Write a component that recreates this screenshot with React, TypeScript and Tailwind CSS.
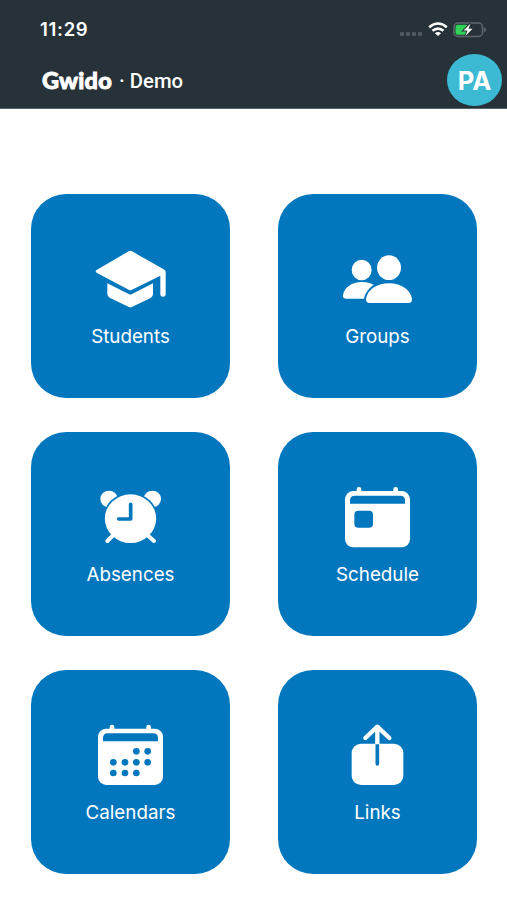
import type { ReactNode } from 'react'

function Icon({ viewBox, children }: { viewBox: string; children: ReactNode }) {
  return (
    <svg width={80} height={70} viewBox={viewBox} fill="white" aria-hidden="true">
      {children}
    </svg>
  )
}

function GraduationIcon() {
  return (
    <Icon viewBox="33 27 240 210">
      <path d="M146 46q5-3 10 0l95 54q6 4 6 8v66q0 8-8 8t-8-8v-55l-85 42q-5 3-10 0l-95-50q-8-5 0-10z" />
      <path d="M82 142l64 32q5 3 10 0l63-32v32q0 8-7 12l-55 26q-6 3-12 0l-56-27q-7-4-7-11z" />
    </Icon>
  )
}

function PeopleIcon() {
  return (
    <Icon viewBox="33 27 240 210">
      <ellipse cx="104" cy="102" rx="30" ry="31" />
      <ellipse cx="186" cy="95" rx="36" ry="37" />
      <path d="M104 138c15 0 28 4 36 8-16 11-26 26-29 42H57c-7 0-10-4-9-10 3-24 28-40 56-40z" />
      <path d="M186 142c39 0 66 22 69 47 1 7-3 12-10 12H128c-8 0-12-5-11-12 4-26 30-47 69-47z" />
    </Icon>
  )
}

function AlarmIcon() {
  return (
    <Icon viewBox="33 22 240 210">
      <ellipse cx="87" cy="70" rx="26" ry="25" />
      <ellipse cx="217" cy="70" rx="26" ry="25" />
      <ellipse cx="151.5" cy="129" rx="82" ry="78" fill="#0277bd" />
      <path d="M100 178L82 196M202 178l20 18" fill="none" stroke="white" strokeWidth="12" strokeLinecap="round" />
      <ellipse cx="151.5" cy="129" rx="77" ry="73" />
      <path d="M152 86v44h-36" fill="none" stroke="#0277bd" strokeWidth="11" strokeLinecap="round" strokeLinejoin="round" />
    </Icon>
  )
}

function CalendarBody() {
  return (
    <>
      <path d="M96 60V41M206 60V41" stroke="white" strokeWidth="14" strokeLinecap="round" />
      <rect x="54" y="46" width="195" height="169" rx="25" />
      <path d="M83 60h137q14 0 14 14v10H69V74q0-14 14-14z" fill="#0277bd" />
    </>
  )
}

function ScheduleIcon() {
  return (
    <Icon viewBox="33 22 240 210">
      <CalendarBody />
      <rect x="82" y="105" width="56" height="51" rx="12" fill="#0277bd" />
    </Icon>
  )
}

const calendarDots = [
  [169, 114], [203, 114],
  [100, 147], [135, 147], [169, 147], [203, 147],
  [100, 179], [135, 179], [169, 179],
]

function CalendarIcon() {
  return (
    <Icon viewBox="33 23 240 210">
      <CalendarBody />
      {calendarDots.map(([x, y]) => (
        <circle key={`${x}-${y}`} cx={x} cy={y} r="10" fill="#0277bd" />
      ))}
    </Icon>
  )
}

function ShareIcon() {
  return (
    <Icon viewBox="33 32 240 210">
      <rect x="74" y="100" width="155" height="124" rx="28" />
      <path d="M151 102V51M115 83l36-34 36 34" fill="none" stroke="white" strokeWidth="13" strokeLinecap="round" strokeLinejoin="round" />
      <path d="M145.5 102h11v58q0 6-5.5 6t-5.5-6z" fill="#0277bd" />
    </Icon>
  )
}

const tiles = [
  { label: 'Students', icon: GraduationIcon },
  { label: 'Groups', icon: PeopleIcon },
  { label: 'Absences', icon: AlarmIcon },
  { label: 'Schedule', icon: ScheduleIcon },
  { label: 'Calendars', icon: CalendarIcon },
  { label: 'Links', icon: ShareIcon },
]

function StatusBar() {
  return (
    <div className="flex h-[54px] items-center justify-between pt-[5px] pr-5 pl-10">
      <span className="text-[18.5px] leading-none font-semibold tracking-[0.7px]">11:29</span>
      <div className="flex items-center">
        <div className="mt-2 mr-1.5 flex gap-0.5">
          {[0, 1, 2, 3].map((dot) => (
            <span key={dot} className="size-1 rounded-[1px] bg-[#4d595f]" />
          ))}
        </div>
        <svg width="20" height="15" viewBox="0 0 20 15" fill="none" stroke="white" strokeWidth="2.6">
          <path d="M1.200 5.200Q10-2.200 18.800 5.200M4.500 8.800q5.500-4.500 11 0" />
          <path d="M10 14L6.900 11.200q3.100-2.400 6.200 0z" fill="white" stroke="none" />
        </svg>
        <svg className="ml-[5px]" width="34" height="16" viewBox="0 0 34 16">
          <rect x="1" y="1" width="28.5" height="13.5" rx="4" fill="none" stroke="#5d686d" strokeWidth="1.5" />
          <path d="M4.500 2.700H14v10.100H4.500q-2 0-2-2V4.700q0-2 2-2z" fill="#30d158" />
          <path d="M31 5.300q2 .5 2 2.500t-2 2.500z" fill="#5d686d" />
          <path d="M17.500 1.500l-7 7h4L12.500 14l7-7.300h-4z" fill="white" stroke="#263238" strokeWidth="2" paintOrder="stroke" />
        </svg>
      </div>
    </div>
  )
}

export default function App() {
  return (
    <div className="min-h-[900px] w-full bg-white font-['Inter',sans-serif] text-white">
      <header className="h-[109px] border-b border-[#59636a] bg-[#263238]">
        <StatusBar />
        <div className="flex h-[52px] items-center justify-between pr-[5px] pl-[42px]">
          <h1 className="flex items-center pt-0.5 leading-none">
            <span className="w-[71px] text-[23.5px] font-black tracking-[0.2px] font-['Lato',sans-serif] [-webkit-text-stroke:0.9px_white]">
              Gwido
            </span>
            <span className="ml-1.5 text-[20.3px] font-medium font-['Roboto',sans-serif]">· Demo</span>
          </h1>
          <div className="flex h-[52px] w-[55px] items-center justify-center rounded-[50%] bg-[#3dbad3] pt-0.5 text-[25.5px] font-bold">
            PA
          </div>
        </div>
      </header>

      <main className="grid grid-cols-[199px_199px] gap-x-12 gap-y-[34px] pt-[84.5px] pl-[31px]">
        {tiles.map(({ label, icon: TileIcon }) => (
          <button
            key={label}
            className="flex h-[204px] flex-col items-center rounded-[35px] bg-[#0277bd] pt-[51px]"
          >
            <TileIcon />
            <span className="mt-2 text-[18.8px] leading-7">{label}</span>
          </button>
        ))}
      </main>
    </div>
  )
}
